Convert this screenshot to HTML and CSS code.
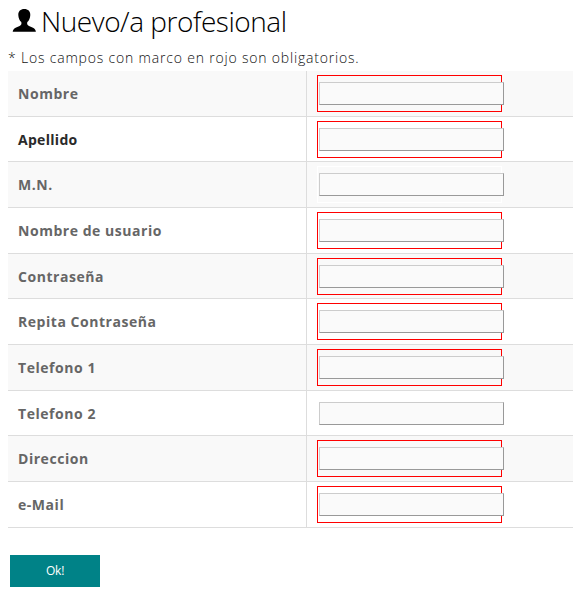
FILE: index.html
```html
<!DOCTYPE html>
<html lang="es">
<head>
<meta charset="utf-8">
<title>Nuevo/a profesional</title>
<link rel="stylesheet" href="styles.css">
</head>
<body>
<h1 class="title"><svg class="user" viewBox="0 0 24 23" aria-hidden="true"><path d="M12.300 0C8.500 0 6.200 2.300 6.300 5.900C6.400 9.300 7.700 11.700 9.300 13.100C9.800 15.300 9.200 16.300 7.600 17L3.600 18.800C1.700 19.700 1 20.900.7 22.800H23.900C23.600 20.900 22.900 19.700 21 18.800L17 17C15.400 16.300 14.800 15.300 15.300 13.100C16.900 11.700 18.200 9.300 18.300 5.900C18.400 2.300 16.100 0 12.300 0Z"/></svg><span class="title-text">Nuevo/a profesional</span></h1>
<p class="note">* Los campos con marco en rojo son obligatorios.</p>
<form>
<div class="fields">
<div class="row"><label class="name" for="f1">Nombre</label><div class="cell"><div class="frame required"><input id="f1" type="text"></div></div></div>
<div class="row"><label class="name active" for="f2">Apellido</label><div class="cell"><div class="frame required"><input id="f2" type="text"></div></div></div>
<div class="row"><label class="name" for="f3">M.N.</label><div class="cell"><div class="frame"><input id="f3" type="text"></div></div></div>
<div class="row"><label class="name" for="f4">Nombre de usuario</label><div class="cell"><div class="frame required"><input id="f4" type="text"></div></div></div>
<div class="row"><label class="name" for="f5">Contraseña</label><div class="cell"><div class="frame required"><input id="f5" type="password"></div></div></div>
<div class="row"><label class="name" for="f6">Repita Contraseña</label><div class="cell"><div class="frame required"><input id="f6" type="password"></div></div></div>
<div class="row"><label class="name" for="f7">Telefono 1</label><div class="cell"><div class="frame required"><input id="f7" type="text"></div></div></div>
<div class="row"><label class="name" for="f8">Telefono 2</label><div class="cell"><div class="frame"><input id="f8" type="text"></div></div></div>
<div class="row"><label class="name" for="f9">Direccion</label><div class="cell"><div class="frame required"><input id="f9" type="text"></div></div></div>
<div class="row"><label class="name" for="f10">e-Mail</label><div class="cell"><div class="frame required"><input id="f10" type="text"></div></div></div>
</div>
<button class="ok" type="button">Ok!</button>
</form>
</body>
</html>
```
FILE: styles.css
```css
* { box-sizing: border-box; }
body {
  margin: 0;
  padding-left: 8px;
  background: #fff;
  font-family: "Open Sans", sans-serif;
  overflow: hidden;
}
.title {
  display: flex;
  height: 45px;
  margin: 0;
  padding-left: 4px;
  color: #000;
  font-size: 28px;
  font-weight: 300;
  line-height: 43px;
  letter-spacing: -0.46px;
}
.user { width: 24px; height: 23px; margin: 9px 5px 0 0; }
.title-text { white-space: nowrap; }
.note {
  height: 26px;
  margin: 0;
  color: #111;
  font-size: 14px;
  font-weight: 300;
  line-height: 26px;
  letter-spacing: 0.81px;
  white-space: nowrap;
}
.fields { display: grid; grid-auto-rows: 45.6667px; }
.row {
  display: grid;
  grid-template-columns: 299px 1fr;
  border-bottom: 1px solid #ddd;
}
.row:nth-child(odd) { background: #f9f9f9; }
.name {
  padding-left: 10px;
  border-right: 1px solid #ddd;
  color: #666;
  font-size: 14px;
  font-weight: 700;
  line-height: 45px;
  letter-spacing: 0.54px;
}
.active { color: #2a2a2a; letter-spacing: 0.3px; }
.cell { padding: 4px 0 0 10px; }
.frame {
  width: 185px;
  height: 37px;
  padding: 6px 0 0 1px;
  border: 1px solid #fff;
}
.required { border-color: #f00; }
.frame input {
  display: block;
  width: 185px;
  height: 23px;
  margin: 0;
  padding: 0 4px;
  border: 1px solid;
  border-color: #ccc #999 #999 #ccc;
  border-radius: 0;
  outline: 0;
  background: #fafafa;
}
.ok {
  display: block;
  width: 90px;
  height: 32px;
  margin: 27px 0 0 2px;
  padding: 0;
  border: 0;
  background: #008287;
  color: #fff;
  font: 400 12px "Open Sans", sans-serif;
  letter-spacing: -0.2px;
}
```
